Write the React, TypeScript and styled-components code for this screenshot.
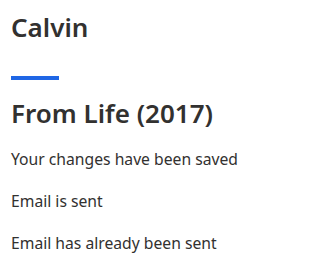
import React from 'react';
import styled, { createGlobalStyle } from 'styled-components';

const GlobalStyle = createGlobalStyle`
  body {
    margin: 0;
    background-color: #ffffff;
    font-family: 'Noto Sans', 'Open Sans', sans-serif;
    color: #323130;
  }
`;

const Page = styled.div`
  display: flex;
  flex-direction: column;
  padding: 9px 11px 0;
`;

const Title = styled.h1`
  margin: 0;
  font-size: 26px;
  line-height: 36px;
  font-weight: 600;
`;

const Accent = styled.div`
  width: 48px;
  height: 4px;
  margin-top: 31px;
  background-color: #1f66e5;
`;

const Subtitle = styled.h2`
  margin: 15px 0 0;
  font-size: 26px;
  line-height: 36px;
  font-weight: 600;
`;

const Messages = styled.div`
  display: flex;
  flex-direction: column;
  gap: 20px;
  margin-top: 17px;
`;

const Message = styled.p`
  margin: 0;
  font-size: 15.7px;
  line-height: 22px;
  font-weight: 400;
`;

const messages = [
  'Your changes have been saved',
  'Email is sent',
  'Email has already been sent',
];

const App = () => (
  <>
    <GlobalStyle />
    <Page>
      <Title>Calvin</Title>
      <Accent />
      <Subtitle>From Life (2017)</Subtitle>
      <Messages>
        {messages.map((text) => (
          <Message key={text}>{text}</Message>
        ))}
      </Messages>
    </Page>
  </>
);

export default App;
